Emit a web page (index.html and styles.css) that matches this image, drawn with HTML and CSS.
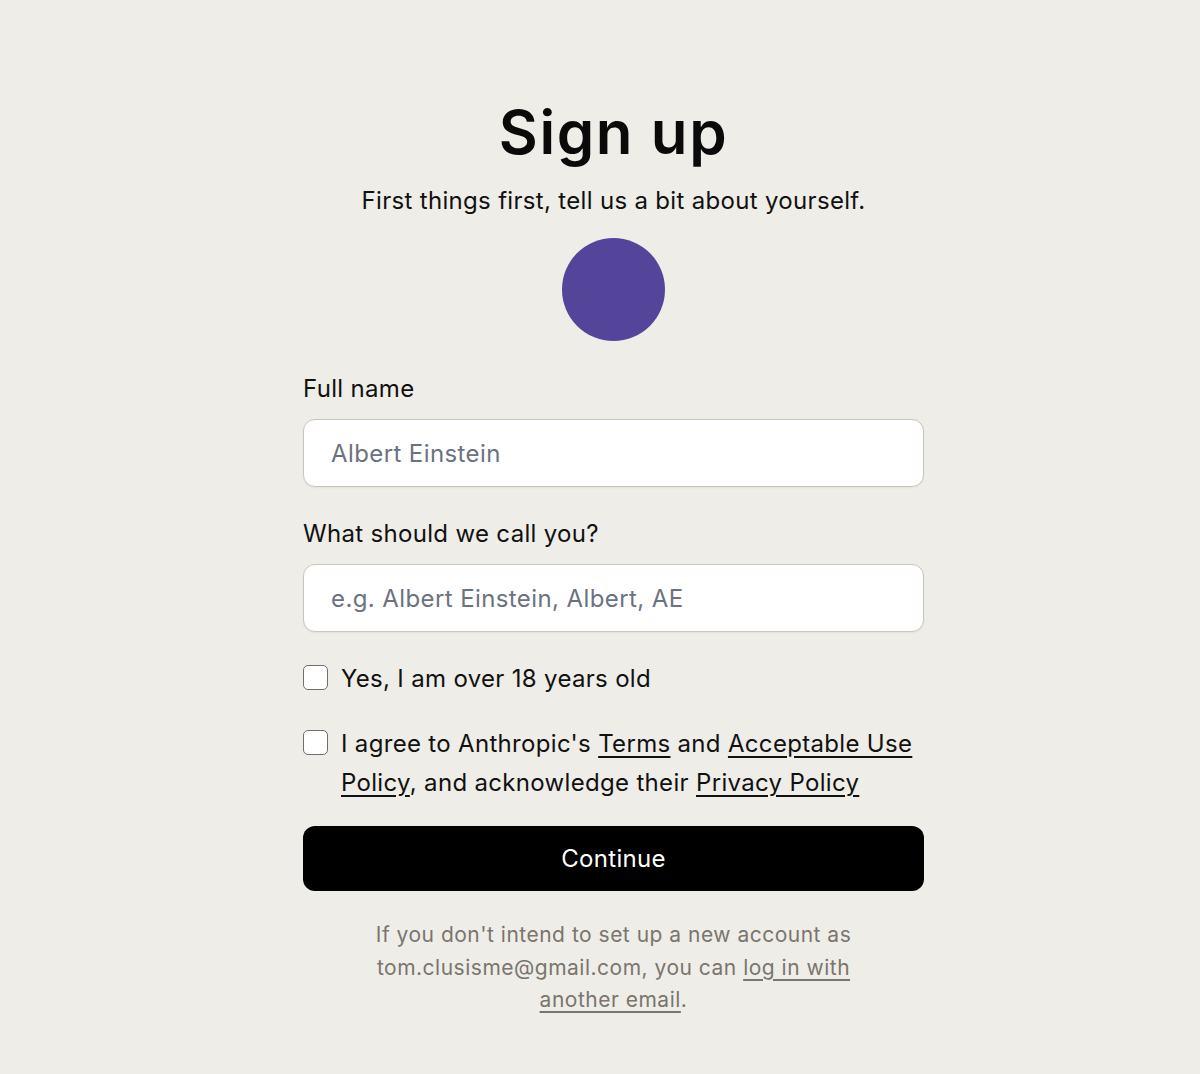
FILE: index.html
```html
<!DOCTYPE html>
<html>
<head>
<meta charset="utf-8">
<link rel="stylesheet" href="styles.css">
</head>
<body>
<main class="page">
  <h1 class="title">Sign up</h1>
  <p class="subtitle">First things first, tell us a bit about yourself.</p>
  <div class="avatar"></div>
  <form class="form">
    <label class="label">Full name</label>
    <div class="input"><span class="ph">Albert Einstein</span></div>
    <label class="label">What should we call you?</label>
    <div class="input"><span class="ph">e.g. Albert Einstein, Albert, AE</span></div>
    <div class="check check-first">
      <span class="box"></span>
      <span class="check-text">Yes, I am over 18 years old</span>
    </div>
    <div class="check check-last">
      <span class="box"></span>
      <span class="check-text">I agree to Anthropic's <a>Terms</a> and <a>Acceptable Use Policy</a>, and acknowledge their <a>Privacy Policy</a></span>
    </div>
    <button class="btn" type="button">Continue</button>
    <p class="foot">If you don't intend to set up a new account as tom.clusisme@gmail.com, you can <a>log in with another email</a>.</p>
  </form>
</main>
</body>
</html>
```

FILE: styles.css
```css
html, body {
  margin: 0;
  padding: 0;
  background: #eeede7;
}
body {
  font-family: Inter, "Noto Sans", sans-serif;
  color: #111;
  letter-spacing: 0.32px;
}
.page {
  width: 621px;
  margin-left: 303px;
  padding-top: 96px;
  display: flex;
  flex-direction: column;
  align-items: center;
}
.title {
  margin: 0;
  font-size: 60px;
  font-weight: 600;
  line-height: 72px;
  letter-spacing: 1.6px;
  color: #0a0a0a;
}
.subtitle {
  margin: 17px 0 0;
  font-size: 24px;
  line-height: 32px;
  color: #111;
}
.avatar {
  margin-top: 21px;
  width: 103px;
  height: 103px;
  border-radius: 50%;
  background: #54459b;
}
.form {
  width: 100%;
  margin-top: 30px;
  display: flex;
  flex-direction: column;
}
.label {
  font-size: 24px;
  line-height: 36px;
  color: #111;
  margin-bottom: 12px;
}
.input {
  box-sizing: border-box;
  height: 68px;
  border: 1.5px solid #cbc5b9;
  border-radius: 12px;
  background: #fff;
  display: flex;
  align-items: center;
  padding-left: 27px;
  margin-bottom: 29px;
  box-shadow: 0 1px 2px rgba(0,0,0,0.05);
}
.ph {
  font-size: 24px;
  color: #6b7280;
  letter-spacing: 0.4px;
}
.check {
  display: flex;
  align-items: flex-start;
  gap: 13px;
  margin-bottom: 26px;
}
.check-first { margin-top: -2px; }
.check-last { margin-bottom: 24px; }
.box {
  flex: none;
  box-sizing: border-box;
  width: 25px;
  height: 25px;
  border: 1.5px solid #6f6f6f;
  border-radius: 5px;
  background: #fff;
  margin-top: 6px;
}
.check-text {
  font-size: 24px;
  line-height: 39px;
  color: #111;
}
.check-text a {
  text-decoration: underline;
  text-underline-offset: 4px;
  color: #111;
}
.btn {
  margin-top: 0;
  height: 65px;
  border: none;
  border-radius: 12px;
  background: #000;
  color: #fff;
  font-family: Inter, "Noto Sans", sans-serif;
  font-size: 24px;
  letter-spacing: 0.3px;
}
.foot {
  margin: 28px auto 0;
  width: 490px;
  text-align: center;
  font-size: 21px;
  line-height: 32.5px;
  letter-spacing: 0.5px;
  color: #7a756d;
}
.foot a {
  text-decoration: underline;
  text-underline-offset: 4px;
}
```
